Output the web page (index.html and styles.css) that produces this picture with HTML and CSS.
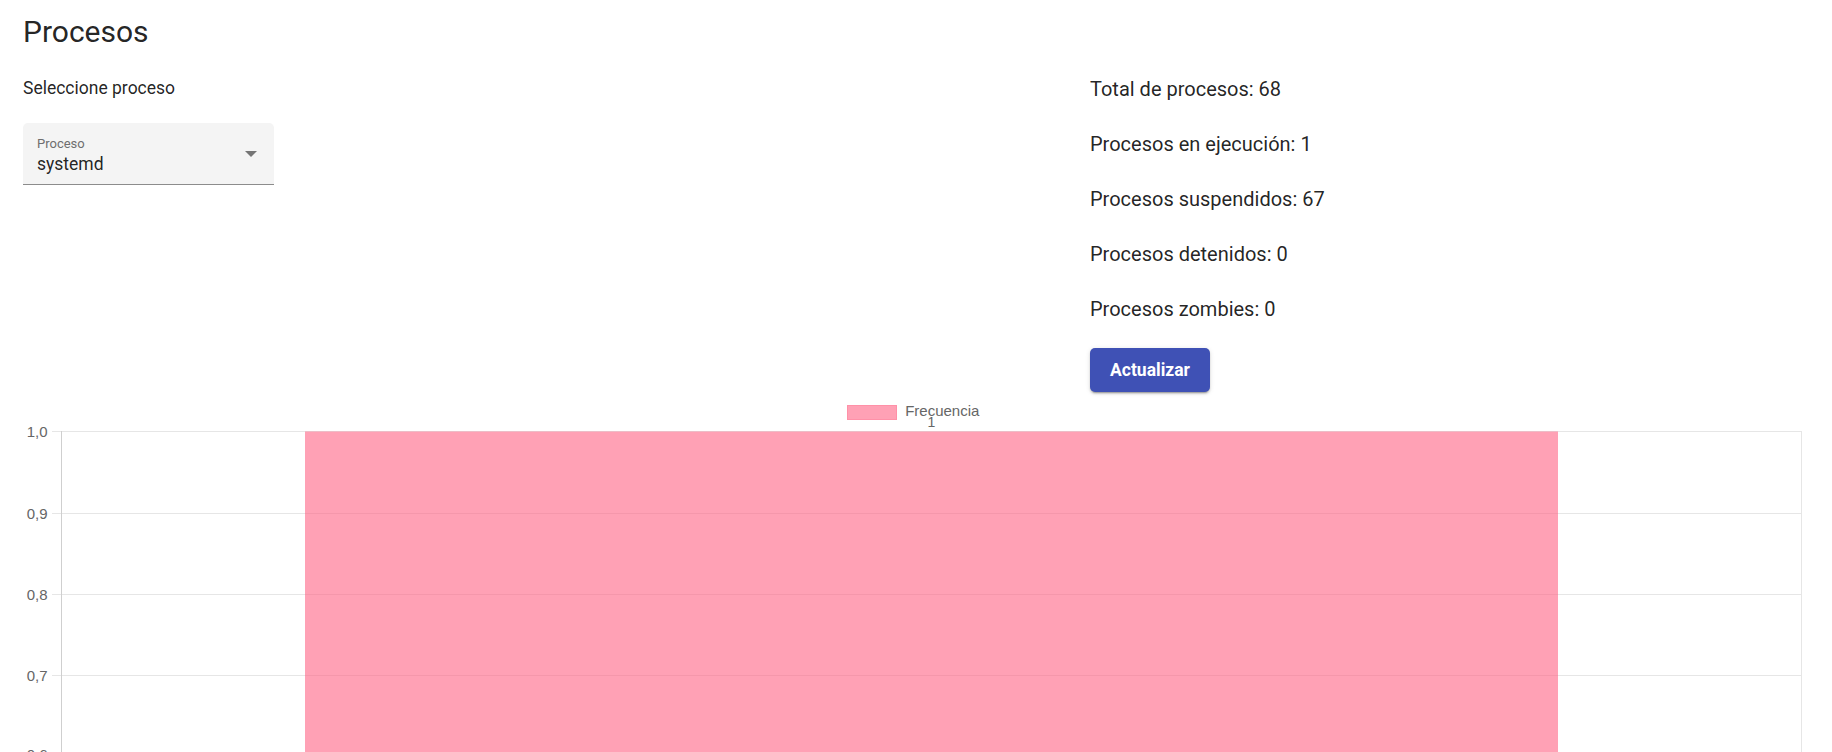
FILE: index.html
```html
<!DOCTYPE html>
<html lang="es">
<head>
<meta charset="utf-8">
<title>Procesos</title>
<link rel="stylesheet" href="styles.css">
</head>
<body>
<div class="page">
  <h1 class="title">Procesos</h1>
  <div class="top-grid">
    <div class="left-col">
      <p class="select-caption">Seleccione proceso</p>
      <div class="select-field">
        <div class="select-content">
          <span class="select-label">Proceso</span>
          <span class="select-value">systemd</span>
        </div>
        <span class="select-arrow"></span>
      </div>
    </div>
    <div class="right-col">
      <ul class="stats">
        <li>Total de procesos: 68</li>
        <li>Procesos en ejecución: 1</li>
        <li>Procesos suspendidos: 67</li>
        <li>Procesos detenidos: 0</li>
        <li>Procesos zombies: 0</li>
      </ul>
      <button class="btn-primary" type="button">Actualizar</button>
    </div>
  </div>
</div>
<div class="chart">
  <div class="legend">
    <span class="legend-box"></span>
    <span class="legend-text">Frecuencia</span>
  </div>
  <svg class="plot" width="1832" height="332" viewBox="0 0 1832 332" xmlns="http://www.w3.org/2000/svg">
    <g stroke="#e6e6e6" stroke-width="1">
      <line x1="52" y1="11.5" x2="1802" y2="11.5"/>
      <line x1="52" y1="93.5" x2="1802" y2="93.5"/>
      <line x1="52" y1="174.5" x2="1802" y2="174.5"/>
      <line x1="52" y1="255.5" x2="1802" y2="255.5"/>
      <line x1="52" y1="336.5" x2="1802" y2="336.5"/>
      <line x1="1801.5" y1="11" x2="1801.5" y2="332"/>
    </g>
    <line x1="61.5" y1="11" x2="61.5" y2="332" stroke="#cfcfcf" stroke-width="1"/>
    <rect x="305" y="11.5" width="1253" height="330" fill="rgba(255,99,132,0.6)"/>
    <g class="tick-labels" font-family="'Liberation Sans', Arial, sans-serif" font-size="15" fill="#666" text-anchor="end">
      <text x="47.5" y="16.8">1,0</text>
      <text x="47.5" y="98.8">0,9</text>
      <text x="47.5" y="179.8">0,8</text>
      <text x="47.5" y="260.8">0,7</text>
      <text x="47.5" y="339.5">0,6</text>
    </g>
    <text x="931.5" y="6.7" font-family="'Liberation Sans', Arial, sans-serif" font-size="14" fill="#666" text-anchor="middle">1</text>
  </svg>
</div>
</body>
</html>
```
FILE: styles.css
```css
html, body {
  margin: 0;
  padding: 0;
  background: #ffffff;
}

body {
  font-family: Roboto, "Helvetica Neue", Arial, sans-serif;
  color: rgba(0, 0, 0, 0.87);
}

.page {
  padding: 11.5px 0 0 23px;
}

.title {
  margin: 0;
  font-size: 30px;
  line-height: 40px;
  font-weight: 400;
}

.top-grid {
  margin-top: 23px;
  display: grid;
  grid-template-columns: 1067px auto;
  align-items: start;
}

.left-col {
  display: flex;
  flex-direction: column;
}

.select-caption {
  margin: 0;
  font-size: 17.5px;
  line-height: 26px;
}

.select-field {
  margin-top: 22px;
  width: 251px;
  box-sizing: border-box;
  display: flex;
  align-items: center;
  padding: 13.5px 17.5px 10px 14px;
  background: #f4f4f4;
  border-radius: 5px 5px 0 0;
  border-bottom: 1.25px solid #8c8c8c;
}

.select-content {
  flex: 1;
  display: flex;
  flex-direction: column;
}

.select-label {
  font-size: 13px;
  line-height: 15px;
  color: #6e6e6e;
}

.select-value {
  margin-top: 3px;
  font-size: 17.5px;
  line-height: 20px;
  color: rgba(0, 0, 0, 0.87);
}

.select-arrow {
  width: 0;
  height: 0;
  margin-top: -3px;
  border-left: 6.25px solid transparent;
  border-right: 6.25px solid transparent;
  border-top: 6.25px solid #757575;
}

.right-col {
  padding-top: 2.5px;
  display: flex;
  flex-direction: column;
  align-items: flex-start;
}

.stats {
  list-style: none;
  margin: 0;
  padding: 0;
  display: flex;
  flex-direction: column;
  gap: 30px;
  font-size: 20px;
  line-height: 25px;
}

.btn-primary {
  margin-top: 25.5px;
  width: 120px;
  height: 44.5px;
  padding: 0;
  border: none;
  border-radius: 5px;
  background: #3f51b5;
  color: #ffffff;
  font-family: Roboto, "Helvetica Neue", Arial, sans-serif;
  font-size: 17.5px;
  font-weight: 700;
  box-shadow: 0 3px 1px -2px rgba(0, 0, 0, 0.2), 0 2px 2px 0 rgba(0, 0, 0, 0.14), 0 1px 5px 0 rgba(0, 0, 0, 0.12);
  cursor: pointer;
}

.chart {
  padding-top: 12.5px;
}

.legend {
  display: flex;
  justify-content: center;
  align-items: flex-start;
  gap: 8.5px;
  padding-right: 6px;
  height: 15px;
}

.legend-box {
  width: 50px;
  height: 15px;
  box-sizing: border-box;
  background: rgba(255, 99, 132, 0.6);
  border: 1.25px solid rgba(255, 99, 132, 0.25);
}

.legend-text {
  font-family: "Liberation Sans", Arial, sans-serif;
  font-size: 15px;
  line-height: 12px;
  color: #666666;
}

.plot {
  display: block;
  overflow: visible;
}
```
